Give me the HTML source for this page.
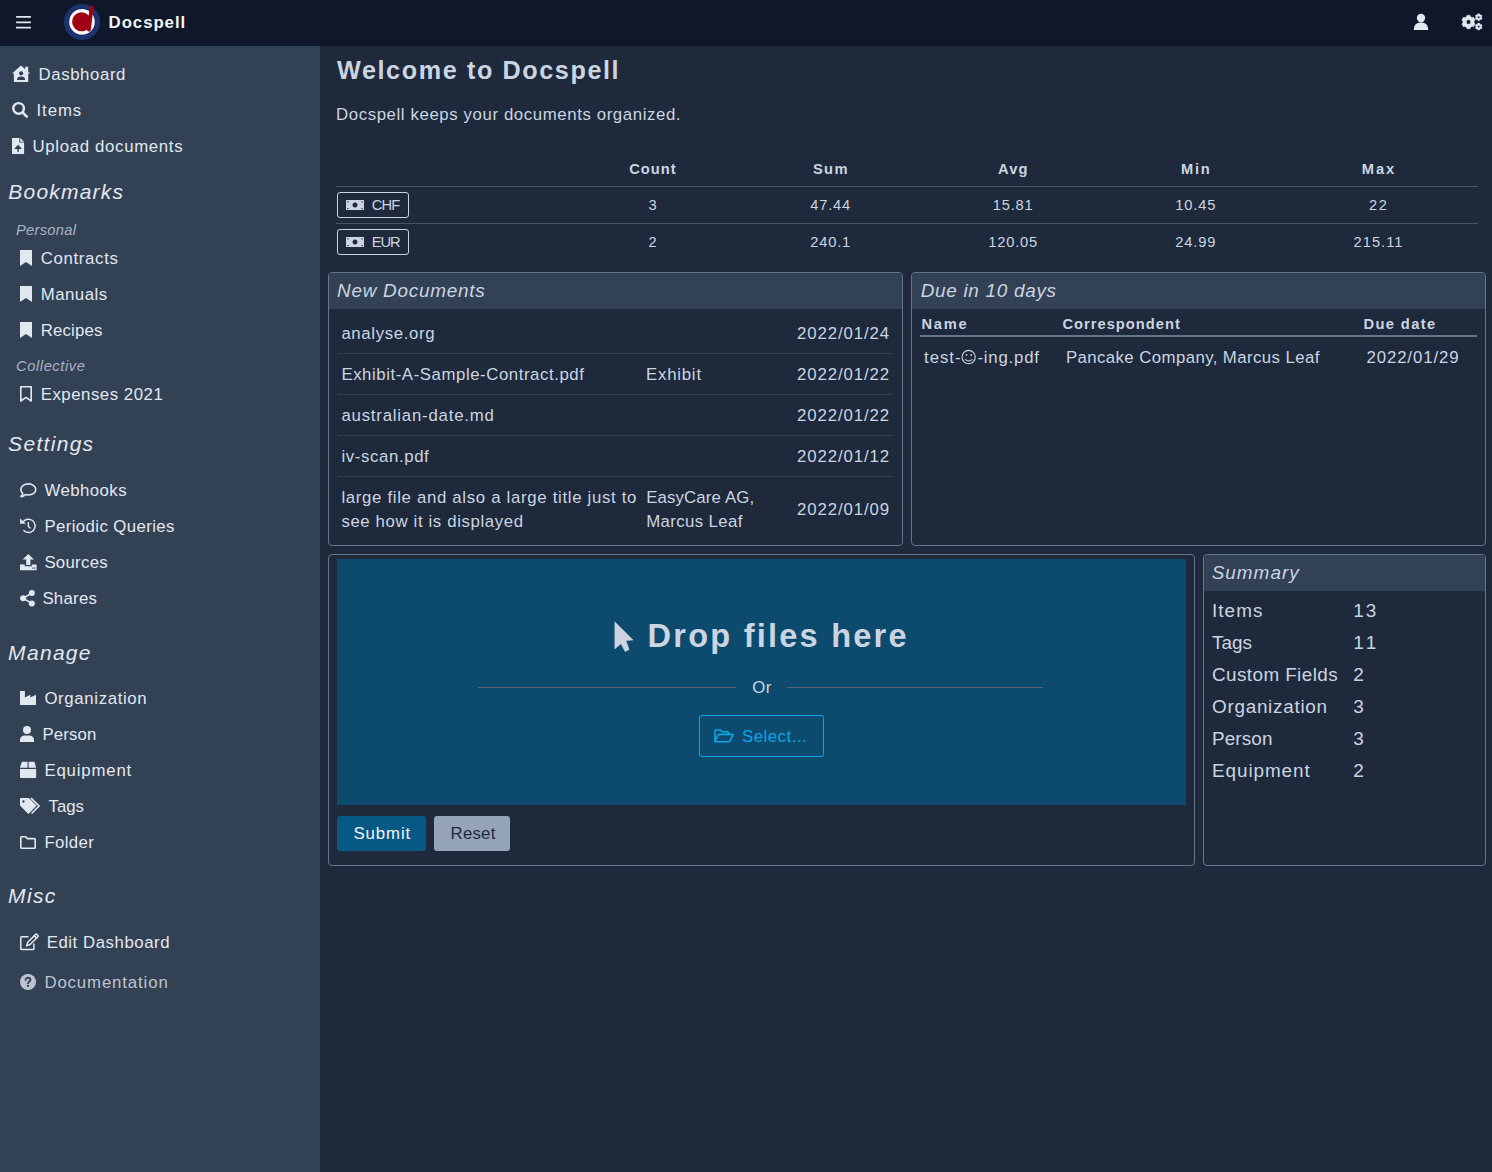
<!DOCTYPE html>
<html><head><meta charset="utf-8"><title>Docspell</title>
<style>
html,body{margin:0;padding:0;}
body{width:1492px;height:1172px;overflow:hidden;background:#1e293b;position:relative;font-family:"Liberation Sans",sans-serif;}
.t{position:absolute;white-space:pre;line-height:1;}
.b{position:absolute;box-sizing:border-box;}
svg.i{position:absolute;overflow:visible;}
</style></head><body>
<!-- top bar -->
<div class="b" style="left:0;top:0;width:1492px;height:46px;background:#0f172a"></div>
<!-- sidebar -->
<div class="b" style="left:0;top:46px;width:320px;height:1126px;background:#334155"></div>

<!-- stats table lines -->
<div class="b" style="left:336px;top:186px;width:1142px;height:1px;background:#475569"></div>
<div class="b" style="left:336px;top:223px;width:1142px;height:1px;background:#475569"></div>
<div class="b" style="left:337px;top:192px;width:72px;height:26px;border:1.5px solid #cbd5e1;border-radius:3px"></div>
<div class="b" style="left:337px;top:229px;width:72px;height:26px;border:1.5px solid #cbd5e1;border-radius:3px"></div>

<!-- cards -->
<div class="b" style="left:328px;top:272px;width:575px;height:274px;border:1px solid #64748b;border-radius:4px;overflow:hidden">
  <div class="b" style="left:0;top:0;width:100%;height:36px;background:#334155"></div>
</div>
<div class="b" style="left:911px;top:272px;width:575px;height:274px;border:1px solid #64748b;border-radius:4px;overflow:hidden">
  <div class="b" style="left:0;top:0;width:100%;height:36px;background:#334155"></div>
</div>
<div class="b" style="left:328px;top:554px;width:867px;height:312px;border:1px solid #64748b;border-radius:4px"></div>
<div class="b" style="left:1203px;top:554px;width:283px;height:312px;border:1px solid #64748b;border-radius:4px;overflow:hidden">
  <div class="b" style="left:0;top:0;width:100%;height:36px;background:#334155"></div>
</div>

<!-- dotted row separators -->
<div class="b" style="left:338px;top:353px;width:555px;height:0;border-top:1px dotted #475569"></div>
<div class="b" style="left:338px;top:394px;width:555px;height:0;border-top:1px dotted #475569"></div>
<div class="b" style="left:338px;top:435px;width:555px;height:0;border-top:1px dotted #475569"></div>
<div class="b" style="left:338px;top:476px;width:555px;height:0;border-top:1px dotted #475569"></div>
<!-- due header line -->
<div class="b" style="left:920px;top:335px;width:557px;height:2px;background:#64748b"></div>

<!-- dropzone -->
<div class="b" style="left:337px;top:559px;width:849px;height:246px;background:#0c4a6e"></div>
<div class="b" style="left:478px;top:687px;width:258px;height:1px;background:#5f6370"></div>
<div class="b" style="left:787px;top:687px;width:256px;height:1px;background:#5f6370"></div>
<div class="b" style="left:699px;top:715px;width:125px;height:42px;border:1px solid #0ea5e9;border-radius:3px"></div>
<div class="b" style="left:337px;top:816px;width:89px;height:35px;background:#075985;border-radius:3px"></div>
<div class="b" style="left:434px;top:816px;width:76px;height:35px;background:#94a3b8;border-radius:3px"></div>

<!-- ICONS -->
<!-- hamburger -->
<svg class="i" style="left:16px;top:16px" width="15" height="13" viewBox="0 0 15 13"><g fill="#e2e8f0"><rect x="0" y="0" width="15" height="1.8" rx=".6"/><rect x="0" y="5.4" width="15" height="1.8" rx=".6"/><rect x="0" y="10.8" width="15" height="1.8" rx=".6"/></g></svg>
<!-- logo -->
<svg class="i" style="left:64px;top:4px" width="36" height="36" viewBox="0 0 36 36">
  <circle cx="18" cy="18" r="18" fill="#1f3270"/>
  <circle cx="18" cy="17.9" r="13.4" fill="#13225e"/>
  <circle cx="18" cy="17.9" r="12.8" fill="#f8fafc"/>
  <circle cx="17.6" cy="17.7" r="9.5" fill="#a00012"/>
  <path d="M27.6 3.6 L24.9 25.7" stroke="#a00012" stroke-width="3.8" stroke-linecap="round"/>
</svg>
<!-- top-right user -->
<svg class="i" style="left:1413px;top:13px" width="16" height="18" viewBox="0 0 16 18"><g fill="#e2e8f0"><circle cx="8" cy="5" r="4.2"/><path d="M0.8 17 C0.8 12 3.5 9.6 8 9.6 C12.5 9.6 15.2 12 15.2 17 Z"/></g></svg>
<!-- cogs -->
<svg class="i" style="left:1461px;top:13px" width="22" height="18" viewBox="0 0 22 18">
  <g fill="#e2e8f0" fill-rule="evenodd" stroke="#e2e8f0" stroke-width="0.4" stroke-linejoin="round">
    <path d="M9.60 14.30 L9.03 15.83 L5.97 15.83 L5.40 14.30 L3.96 13.47 L2.35 13.74 L0.82 11.09 L1.86 9.83 L1.86 8.17 L0.82 6.91 L2.35 4.26 L3.96 4.53 L5.40 3.70 L5.97 2.17 L9.03 2.17 L9.60 3.70 L11.04 4.53 L12.65 4.26 L14.18 6.91 L13.14 8.17 L13.14 9.83 L14.18 11.09 L12.65 13.74 L11.04 13.47 Z M9.70 9.00 A2.2 2.2 0 1 0 5.30 9.00 A2.2 2.2 0 1 0 9.70 9.00 Z"/>
    <path d="M18.73 6.80 L18.49 7.71 L16.91 7.71 L16.67 6.80 L15.96 6.39 L15.05 6.64 L14.26 5.28 L14.93 4.61 L14.93 3.79 L14.26 3.12 L15.05 1.76 L15.96 2.01 L16.67 1.60 L16.91 0.69 L18.49 0.69 L18.73 1.60 L19.44 2.01 L20.35 1.76 L21.14 3.12 L20.47 3.79 L20.47 4.61 L21.14 5.28 L20.35 6.64 L19.44 6.39 Z M18.80 4.20 A1.1 1.1 0 1 0 16.60 4.20 A1.1 1.1 0 1 0 18.80 4.20 Z"/>
    <path d="M18.73 16.20 L18.49 17.11 L16.91 17.11 L16.67 16.20 L15.96 15.79 L15.05 16.04 L14.26 14.68 L14.93 14.01 L14.93 13.19 L14.26 12.52 L15.05 11.16 L15.96 11.41 L16.67 11.00 L16.91 10.09 L18.49 10.09 L18.73 11.00 L19.44 11.41 L20.35 11.16 L21.14 12.52 L20.47 13.19 L20.47 14.01 L21.14 14.68 L20.35 16.04 L19.44 15.79 Z M18.80 13.60 A1.1 1.1 0 1 0 16.60 13.60 A1.1 1.1 0 1 0 18.80 13.60 Z"/>
  </g>
</svg>
<!-- house-user -->
<svg class="i" style="left:12px;top:65px" width="19" height="18" viewBox="0 0 19 18">
  <path fill="#e2e8f0" d="M9 0.6 L13.2 4.2 L13.2 1.8 L16.2 1.8 L16.2 6.8 L18.2 8.6 L16.2 8.6 L16.2 17 L1.9 17 L1.9 8.6 L0 8.6 Z"/>
  <circle cx="9.1" cy="8.3" r="2.1" fill="#334155"/>
  <path fill="#334155" d="M5 15 C5 12.6 6.6 11.6 9.1 11.6 C11.6 11.6 13.2 12.6 13.2 15 Z"/>
</svg>
<!-- search -->
<svg class="i" style="left:12px;top:102px" width="17" height="17" viewBox="0 0 17 17"><g fill="none" stroke="#e2e8f0"><circle cx="6.6" cy="6.4" r="5.3" stroke-width="2.4"/><path d="M10.6 10.5 L14.8 14.6" stroke-width="2.6" stroke-linecap="round"/></g></svg>
<!-- file upload -->
<svg class="i" style="left:12px;top:138px" width="13" height="16" viewBox="0 0 13 16">
  <path fill="#e2e8f0" d="M0 0 L7.4 0 L7.4 4.6 L12.1 4.6 L12.1 16 L0 16 Z"/>
  <path fill="#e2e8f0" d="M8.3 0 L12.1 3.8 L8.3 3.8 Z"/>
  <path fill="#334155" d="M6.1 6.8 L10 10.9 L6.85 10.9 L6.85 13.8 L5.35 13.8 L5.35 10.9 L2.1 10.9 Z"/>
</svg>
<!-- bookmarks solid -->
<svg class="i" style="left:20px;top:250px" width="12" height="16" viewBox="0 0 12 16"><path fill="#e2e8f0" d="M0 0 H12 V16 L6 12 L0 16 Z"/></svg>
<svg class="i" style="left:20px;top:286px" width="12" height="16" viewBox="0 0 12 16"><path fill="#e2e8f0" d="M0 0 H12 V16 L6 12 L0 16 Z"/></svg>
<svg class="i" style="left:20px;top:322px" width="12" height="16" viewBox="0 0 12 16"><path fill="#e2e8f0" d="M0 0 H12 V16 L6 12 L0 16 Z"/></svg>
<!-- bookmark outline -->
<svg class="i" style="left:20px;top:386px" width="12" height="16" viewBox="0 0 12 16"><path fill="none" stroke="#e2e8f0" stroke-width="1.6" stroke-linejoin="round" d="M0.8 0.8 H11.2 V15 L6 11.4 L0.8 15 Z"/></svg>
<!-- comment (webhooks) -->
<svg class="i" style="left:20px;top:483px" width="17" height="15" viewBox="0 0 17 15"><path fill="none" stroke="#e2e8f0" stroke-width="1.6" stroke-linejoin="round" d="M8.3 0.9 C12.6 0.9 15.8 3.4 15.8 6.5 C15.8 9.6 12.6 12 8.3 12 C7.3 12 6.4 11.9 5.5 11.6 C4.3 12.6 2.6 13.6 0.9 13.6 C1.9 12.6 2.6 11.5 2.8 10.4 C1.5 9.3 0.8 8 0.8 6.5 C0.8 3.4 4 0.9 8.3 0.9 Z"/></svg>
<!-- history -->
<svg class="i" style="left:20px;top:517px" width="17" height="17" viewBox="0 0 17 17">
  <path fill="none" stroke="#e2e8f0" stroke-width="1.5" d="M2.72 5.30 A6.7 6.7 0 1 1 3.42 13.33"/>
  <path fill="#e2e8f0" d="M0.1 1.6 L0.1 6.7 L5.9 6.7 Z"/>
  <path fill="none" stroke="#e2e8f0" stroke-width="1.4" stroke-linecap="round" d="M8.3 5.6 V9.3 L10.1 11"/>
</svg>
<!-- upload (sources) -->
<svg class="i" style="left:20px;top:554px" width="17" height="17" viewBox="0 0 17 17">
  <path fill="#e2e8f0" d="M8.3 0 L14 5.6 L10.4 5.6 L10.4 11 L6.2 11 L6.2 5.6 L2.6 5.6 Z"/>
  <path fill="#e2e8f0" d="M0 10.6 L4.8 10.6 L4.8 12.2 L11.8 12.2 L11.8 10.6 L16.6 10.6 L16.6 16.2 L0 16.2 Z"/>
  <rect x="12.3" y="13.5" width="1.2" height="1.2" fill="#334155"/><rect x="14.1" y="13.5" width="1.2" height="1.2" fill="#334155"/>
</svg>
<!-- share -->
<svg class="i" style="left:20px;top:590px" width="15" height="17" viewBox="0 0 15 17">
  <g fill="#e2e8f0"><circle cx="11.8" cy="3.1" r="3"/><circle cx="3.1" cy="8.3" r="3"/><circle cx="11.8" cy="13.4" r="3"/></g>
  <path fill="none" stroke="#e2e8f0" stroke-width="1.6" d="M11.8 3.1 L3.1 8.3 L11.8 13.4"/>
</svg>
<!-- industry -->
<svg class="i" style="left:20px;top:691px" width="16" height="14" viewBox="0 0 16 14"><path fill="#e2e8f0" d="M0 0 H4.9 V6.6 L10.3 3.7 V6.6 L16 3.7 V14 H0 Z"/></svg>
<!-- person -->
<svg class="i" style="left:20px;top:726px" width="14" height="16" viewBox="0 0 14 16"><g fill="#e2e8f0"><circle cx="7" cy="4" r="4"/><path d="M0 16 V13.8 C0 11.2 2 9.4 4.6 9.4 H9.4 C12 9.4 14 11.2 14 13.8 V16 Z"/></g></svg>
<!-- box -->
<svg class="i" style="left:20px;top:761px" width="17" height="18" viewBox="0 0 17 18"><g fill="#e2e8f0"><path d="M1.8 0.7 H7.5 V6.7 H0 Z"/><path d="M8.6 0.7 H14.4 L16.2 6.7 H8.6 Z"/><path d="M0 8.1 H16.2 V16.1 Q16.2 17.1 15.2 17.1 H1 Q0 17.1 0 16.1 Z"/></g></svg>
<!-- tags -->
<svg class="i" style="left:20px;top:797px" width="21" height="18" viewBox="0 0 21 18">
  <path fill="#e2e8f0" fill-rule="evenodd" d="M0 2 Q0 0.9 1.1 0.9 L8.9 0.9 L16.2 8.3 Q16.6 8.7 16.2 9.1 L9 16.4 Q8.4 17 7.8 16.4 L0 8.6 Z M3.4 3.2 A1.25 1.25 0 1 0 3.41 3.2 Z"/>
  <path fill="none" stroke="#e2e8f0" stroke-width="1.7" d="M11 1.1 L19 9 L11.6 16.5"/>
</svg>
<!-- folder -->
<svg class="i" style="left:20px;top:836px" width="16" height="13" viewBox="0 0 16 13"><path fill="none" stroke="#e2e8f0" stroke-width="1.6" stroke-linejoin="round" d="M0.8 1.6 C0.8 1.1 1.1 0.8 1.6 0.8 H5.8 L7.4 2.6 H14.4 C14.9 2.6 15.2 2.9 15.2 3.4 V11.4 C15.2 11.9 14.9 12.2 14.4 12.2 H1.6 C1.1 12.2 0.8 11.9 0.8 11.4 Z"/></svg>
<!-- edit -->
<svg class="i" style="left:20px;top:933px" width="19" height="18" viewBox="0 0 19 18">
  <path fill="none" stroke="#e2e8f0" stroke-width="1.5" stroke-linejoin="round" d="M8.6 3.7 H1.6 Q0.8 3.7 0.8 4.5 V15.9 Q0.8 16.6 1.6 16.6 H13.1 Q13.9 16.6 13.9 15.9 V10.6"/>
  <path fill="none" stroke="#e2e8f0" stroke-width="1.5" stroke-linejoin="round" d="M15.6 1.4 Q16.2 0.9 16.8 1.4 L17.9 2.5 Q18.4 3.1 17.9 3.7 L10.1 11.5 L6.6 12.7 L7.8 9.2 Z M14.2 2.8 L16.5 5.1"/>
</svg>
<!-- question -->
<svg class="i" style="left:20px;top:974px" width="16" height="16" viewBox="0 0 16 16">
  <circle cx="8" cy="8" r="8" fill="#bec4ce"/>
  <path fill="none" stroke="#334155" stroke-width="1.9" stroke-linecap="round" d="M5.6 6.1 C5.6 4.6 6.7 3.8 8 3.8 C9.4 3.8 10.4 4.6 10.4 5.9 C10.4 7.4 8.1 7.6 8.1 9.2"/>
  <circle cx="8.1" cy="11.9" r="1.1" fill="#334155"/>
</svg>
<!-- money bills -->
<svg class="i" style="left:346px;top:200px" width="18" height="11" viewBox="0 0 18 11"><path fill="#cbd5e1" fill-rule="evenodd" d="M0 0 H18 V10 H0 Z M9 2.4 A2.5 2.5 0 1 0 9.01 2.4 Z"/><g fill="#1e293b"><rect x="1.3" y="1.3" width="1.2" height="1.2"/><rect x="15.5" y="1.3" width="1.2" height="1.2"/><rect x="1.3" y="8" width="1.2" height="1.2"/><rect x="15.5" y="8" width="1.2" height="1.2"/></g></svg>
<svg class="i" style="left:346px;top:237px" width="18" height="11" viewBox="0 0 18 11"><path fill="#cbd5e1" fill-rule="evenodd" d="M0 0 H18 V10 H0 Z M9 2.4 A2.5 2.5 0 1 0 9.01 2.4 Z"/><g fill="#1e293b"><rect x="1.3" y="1.3" width="1.2" height="1.2"/><rect x="15.5" y="1.3" width="1.2" height="1.2"/><rect x="1.3" y="8" width="1.2" height="1.2"/><rect x="15.5" y="8" width="1.2" height="1.2"/></g></svg>
<!-- pointer -->
<svg class="i" style="left:614px;top:621px" width="20" height="32" viewBox="0 0 20 32"><path fill="#cbd5e1" stroke="#cbd5e1" stroke-width="0.6" stroke-linejoin="round" d="M0.9 1 L19 19 L11.9 19.5 L15.1 28.6 L11.1 30.5 L7 22.7 L0.9 27.8 Z"/></svg>
<!-- folder open -->
<svg class="i" style="left:714px;top:729px" width="20" height="14" viewBox="0 0 20 14"><path fill="none" stroke="#0ea5e9" stroke-width="1.6" stroke-linejoin="round" d="M1 12.2 V2 C1 1.4 1.4 1 2 1 H6.4 L8.2 2.8 H13.4 C14 2.8 14.4 3.2 14.4 3.8 V5.4 M1 12.2 L4.2 6 C4.4 5.6 4.8 5.4 5.2 5.4 H18.2 C18.8 5.4 19.1 6 18.8 6.5 L15.8 12.2 C15.6 12.6 15.2 12.8 14.8 12.8 H1.8 C1.4 12.8 1.1 12.6 1 12.2 Z"/></svg>
<!-- smiley -->
<svg class="i" style="left:961px;top:350px" width="16" height="15" viewBox="0 0 16 15"><g fill="none" stroke="#cbd5e1" stroke-width="1.1"><ellipse cx="7.65" cy="7.1" rx="6.6" ry="6.7"/><path d="M4.1 9.3 Q7.65 12.6 11.4 9.3"/></g><g fill="#cbd5e1"><rect x="4.8" y="4.2" width="1.5" height="1.6"/><rect x="9.4" y="4.2" width="1.5" height="1.6"/></g></svg>


<!-- TEXTS -->
<span class="t" style="left:108.60px;top:15.20px;font-family:'Liberation Sans';font-size:16.80px;font-weight:bold;font-style:normal;letter-spacing:0.944px;color:#f1f5f9">Docspell</span>
<span class="t" style="left:38.60px;top:67.00px;font-family:'Liberation Sans';font-size:16.80px;font-weight:normal;font-style:normal;letter-spacing:0.588px;color:#e2e8f0">Dasbhoard</span>
<span class="t" style="left:36.50px;top:103.00px;font-family:'Liberation Sans';font-size:16.80px;font-weight:normal;font-style:normal;letter-spacing:0.934px;color:#e2e8f0">Items</span>
<span class="t" style="left:32.40px;top:139.00px;font-family:'Liberation Sans';font-size:16.80px;font-weight:normal;font-style:normal;letter-spacing:0.685px;color:#e2e8f0">Upload documents</span>
<span class="t" style="left:40.70px;top:251.00px;font-family:'Liberation Sans';font-size:16.80px;font-weight:normal;font-style:normal;letter-spacing:0.670px;color:#e2e8f0">Contracts</span>
<span class="t" style="left:40.70px;top:287.00px;font-family:'Liberation Sans';font-size:16.80px;font-weight:normal;font-style:normal;letter-spacing:0.508px;color:#e2e8f0">Manuals</span>
<span class="t" style="left:40.70px;top:323.00px;font-family:'Liberation Sans';font-size:16.80px;font-weight:normal;font-style:normal;letter-spacing:0.198px;color:#e2e8f0">Recipes</span>
<span class="t" style="left:40.70px;top:387.00px;font-family:'Liberation Sans';font-size:16.80px;font-weight:normal;font-style:normal;letter-spacing:0.529px;color:#e2e8f0">Expenses 2021</span>
<span class="t" style="left:44.40px;top:483.00px;font-family:'Liberation Sans';font-size:16.80px;font-weight:normal;font-style:normal;letter-spacing:0.460px;color:#e2e8f0">Webhooks</span>
<span class="t" style="left:44.40px;top:519.00px;font-family:'Liberation Sans';font-size:16.80px;font-weight:normal;font-style:normal;letter-spacing:0.396px;color:#e2e8f0">Periodic Queries</span>
<span class="t" style="left:44.40px;top:555.00px;font-family:'Liberation Sans';font-size:16.80px;font-weight:normal;font-style:normal;letter-spacing:0.289px;color:#e2e8f0">Sources</span>
<span class="t" style="left:42.40px;top:591.00px;font-family:'Liberation Sans';font-size:16.80px;font-weight:normal;font-style:normal;letter-spacing:0.269px;color:#e2e8f0">Shares</span>
<span class="t" style="left:44.40px;top:691.00px;font-family:'Liberation Sans';font-size:16.80px;font-weight:normal;font-style:normal;letter-spacing:0.649px;color:#e2e8f0">Organization</span>
<span class="t" style="left:42.50px;top:727.00px;font-family:'Liberation Sans';font-size:16.80px;font-weight:normal;font-style:normal;letter-spacing:0.119px;color:#e2e8f0">Person</span>
<span class="t" style="left:44.40px;top:763.00px;font-family:'Liberation Sans';font-size:16.80px;font-weight:normal;font-style:normal;letter-spacing:0.828px;color:#e2e8f0">Equipment</span>
<span class="t" style="left:48.60px;top:799.00px;font-family:'Liberation Sans';font-size:16.80px;font-weight:normal;font-style:normal;letter-spacing:-0.010px;color:#e2e8f0">Tags</span>
<span class="t" style="left:44.40px;top:835.00px;font-family:'Liberation Sans';font-size:16.80px;font-weight:normal;font-style:normal;letter-spacing:0.375px;color:#e2e8f0">Folder</span>
<span class="t" style="left:46.70px;top:935.00px;font-family:'Liberation Sans';font-size:16.80px;font-weight:normal;font-style:normal;letter-spacing:0.553px;color:#e2e8f0">Edit Dashboard</span>
<span class="t" style="left:44.40px;top:975.00px;font-family:'Liberation Sans';font-size:16.80px;font-weight:normal;font-style:normal;letter-spacing:0.872px;color:#bec4ce">Documentation</span>
<span class="t" style="left:8.30px;top:180.50px;font-family:'Liberation Sans';font-size:21.00px;font-weight:normal;font-style:italic;letter-spacing:1.215px;color:#e2e8f0">Bookmarks</span>
<span class="t" style="left:8.10px;top:433.00px;font-family:'Liberation Sans';font-size:21.00px;font-weight:normal;font-style:italic;letter-spacing:1.306px;color:#e2e8f0">Settings</span>
<span class="t" style="left:8.10px;top:641.50px;font-family:'Liberation Sans';font-size:21.00px;font-weight:normal;font-style:italic;letter-spacing:1.312px;color:#e2e8f0">Manage</span>
<span class="t" style="left:8.10px;top:884.50px;font-family:'Liberation Sans';font-size:21.00px;font-weight:normal;font-style:italic;letter-spacing:1.354px;color:#e2e8f0">Misc</span>
<span class="t" style="left:16.00px;top:223.00px;font-family:'Liberation Sans';font-size:14.70px;font-weight:normal;font-style:italic;letter-spacing:0.292px;color:#a9b4c4">Personal</span>
<span class="t" style="left:16.10px;top:359.00px;font-family:'Liberation Sans';font-size:14.70px;font-weight:normal;font-style:italic;letter-spacing:0.561px;color:#a9b4c4">Collective</span>
<span class="t" style="left:337.00px;top:58.00px;font-family:'Liberation Sans';font-size:25.20px;font-weight:bold;font-style:normal;letter-spacing:1.597px;color:#cbd5e1">Welcome to Docspell</span>
<span class="t" style="left:336.00px;top:107.40px;font-family:'Liberation Sans';font-size:16.80px;font-weight:normal;font-style:normal;letter-spacing:0.606px;color:#cbd5e1">Docspell keeps your documents organized.</span>
<span class="t" style="left:629.23px;top:162.00px;font-family:'Liberation Sans';font-size:14.70px;font-weight:bold;font-style:normal;letter-spacing:1.027px;color:#cbd5e1">Count</span>
<span class="t" style="left:812.88px;top:162.00px;font-family:'Liberation Sans';font-size:14.70px;font-weight:bold;font-style:normal;letter-spacing:1.406px;color:#cbd5e1">Sum</span>
<span class="t" style="left:997.96px;top:162.00px;font-family:'Liberation Sans';font-size:14.70px;font-weight:bold;font-style:normal;letter-spacing:1.141px;color:#cbd5e1">Avg</span>
<span class="t" style="left:1180.95px;top:162.00px;font-family:'Liberation Sans';font-size:14.70px;font-weight:bold;font-style:normal;letter-spacing:1.703px;color:#cbd5e1">Min</span>
<span class="t" style="left:1361.79px;top:162.00px;font-family:'Liberation Sans';font-size:14.70px;font-weight:bold;font-style:normal;letter-spacing:1.922px;color:#cbd5e1">Max</span>
<span class="t" style="left:648.41px;top:198.20px;font-family:'Liberation Sans';font-size:14.70px;font-weight:normal;font-style:normal;letter-spacing:0.000px;color:#cbd5e1">3</span>
<span class="t" style="left:810.15px;top:198.20px;font-family:'Liberation Sans';font-size:14.70px;font-weight:normal;font-style:normal;letter-spacing:0.832px;color:#cbd5e1">47.44</span>
<span class="t" style="left:992.65px;top:198.20px;font-family:'Liberation Sans';font-size:14.70px;font-weight:normal;font-style:normal;letter-spacing:0.832px;color:#cbd5e1">15.81</span>
<span class="t" style="left:1175.25px;top:198.20px;font-family:'Liberation Sans';font-size:14.70px;font-weight:normal;font-style:normal;letter-spacing:0.832px;color:#cbd5e1">10.45</span>
<span class="t" style="left:1369.09px;top:198.20px;font-family:'Liberation Sans';font-size:14.70px;font-weight:normal;font-style:normal;letter-spacing:1.484px;color:#cbd5e1">22</span>
<span class="t" style="left:648.41px;top:235.20px;font-family:'Liberation Sans';font-size:14.70px;font-weight:normal;font-style:normal;letter-spacing:0.000px;color:#cbd5e1">2</span>
<span class="t" style="left:810.15px;top:235.20px;font-family:'Liberation Sans';font-size:14.70px;font-weight:normal;font-style:normal;letter-spacing:0.832px;color:#cbd5e1">240.1</span>
<span class="t" style="left:988.20px;top:235.20px;font-family:'Liberation Sans';font-size:14.70px;font-weight:normal;font-style:normal;letter-spacing:0.812px;color:#cbd5e1">120.05</span>
<span class="t" style="left:1175.25px;top:235.20px;font-family:'Liberation Sans';font-size:14.70px;font-weight:normal;font-style:normal;letter-spacing:0.832px;color:#cbd5e1">24.99</span>
<span class="t" style="left:1353.50px;top:235.20px;font-family:'Liberation Sans';font-size:14.70px;font-weight:normal;font-style:normal;letter-spacing:1.031px;color:#cbd5e1">215.11</span>
<span class="t" style="left:371.80px;top:198.30px;font-family:'Liberation Sans';font-size:14.70px;font-weight:normal;font-style:normal;letter-spacing:-0.914px;color:#cbd5e1">CHF</span>
<span class="t" style="left:371.80px;top:235.20px;font-family:'Liberation Sans';font-size:14.70px;font-weight:normal;font-style:normal;letter-spacing:-1.094px;color:#cbd5e1">EUR</span>
<span class="t" style="left:337.00px;top:282.00px;font-family:'Liberation Sans';font-size:18.90px;font-weight:normal;font-style:italic;letter-spacing:0.753px;color:#cbd5e1">New Documents</span>
<span class="t" style="left:341.40px;top:326.00px;font-family:'Liberation Sans';font-size:16.80px;font-weight:normal;font-style:normal;letter-spacing:0.641px;color:#cbd5e1">analyse.org</span>
<span class="t" style="left:796.98px;top:326.00px;font-family:'Liberation Sans';font-size:16.80px;font-weight:normal;font-style:normal;letter-spacing:0.913px;color:#cbd5e1">2022/01/24</span>
<span class="t" style="left:341.40px;top:367.20px;font-family:'Liberation Sans';font-size:16.80px;font-weight:normal;font-style:normal;letter-spacing:0.565px;color:#cbd5e1">Exhibit-A-Sample-Contract.pdf</span>
<span class="t" style="left:646.00px;top:367.20px;font-family:'Liberation Sans';font-size:16.80px;font-weight:normal;font-style:normal;letter-spacing:0.779px;color:#cbd5e1">Exhibit</span>
<span class="t" style="left:796.98px;top:367.20px;font-family:'Liberation Sans';font-size:16.80px;font-weight:normal;font-style:normal;letter-spacing:0.913px;color:#cbd5e1">2022/01/22</span>
<span class="t" style="left:341.40px;top:408.00px;font-family:'Liberation Sans';font-size:16.80px;font-weight:normal;font-style:normal;letter-spacing:0.791px;color:#cbd5e1">australian-date.md</span>
<span class="t" style="left:796.98px;top:408.00px;font-family:'Liberation Sans';font-size:16.80px;font-weight:normal;font-style:normal;letter-spacing:0.913px;color:#cbd5e1">2022/01/22</span>
<span class="t" style="left:341.40px;top:449.00px;font-family:'Liberation Sans';font-size:16.80px;font-weight:normal;font-style:normal;letter-spacing:0.622px;color:#cbd5e1">iv-scan.pdf</span>
<span class="t" style="left:796.98px;top:449.00px;font-family:'Liberation Sans';font-size:16.80px;font-weight:normal;font-style:normal;letter-spacing:0.913px;color:#cbd5e1">2022/01/12</span>
<span class="t" style="left:341.40px;top:490.00px;font-family:'Liberation Sans';font-size:16.80px;font-weight:normal;font-style:normal;letter-spacing:0.681px;color:#cbd5e1">large file and also a large title just to</span>
<span class="t" style="left:341.40px;top:514.00px;font-family:'Liberation Sans';font-size:16.80px;font-weight:normal;font-style:normal;letter-spacing:0.627px;color:#cbd5e1">see how it is displayed</span>
<span class="t" style="left:646.20px;top:490.00px;font-family:'Liberation Sans';font-size:16.80px;font-weight:normal;font-style:normal;letter-spacing:0.152px;color:#cbd5e1">EasyCare AG,</span>
<span class="t" style="left:646.20px;top:514.00px;font-family:'Liberation Sans';font-size:16.80px;font-weight:normal;font-style:normal;letter-spacing:0.377px;color:#cbd5e1">Marcus Leaf</span>
<span class="t" style="left:796.98px;top:502.00px;font-family:'Liberation Sans';font-size:16.80px;font-weight:normal;font-style:normal;letter-spacing:0.913px;color:#cbd5e1">2022/01/09</span>
<span class="t" style="left:920.70px;top:282.00px;font-family:'Liberation Sans';font-size:18.90px;font-weight:normal;font-style:italic;letter-spacing:0.714px;color:#cbd5e1">Due in 10 days</span>
<span class="t" style="left:921.50px;top:317.00px;font-family:'Liberation Sans';font-size:14.70px;font-weight:bold;font-style:normal;letter-spacing:1.745px;color:#cbd5e1">Name</span>
<span class="t" style="left:1062.50px;top:317.00px;font-family:'Liberation Sans';font-size:14.70px;font-weight:bold;font-style:normal;letter-spacing:1.004px;color:#cbd5e1">Correspondent</span>
<span class="t" style="left:1363.50px;top:317.00px;font-family:'Liberation Sans';font-size:14.70px;font-weight:bold;font-style:normal;letter-spacing:1.371px;color:#cbd5e1">Due date</span>
<span class="t" style="left:924.10px;top:350.00px;font-family:'Liberation Sans';font-size:16.80px;font-weight:normal;font-style:normal;letter-spacing:0.965px;color:#cbd5e1">test-</span>
<span class="t" style="left:977.40px;top:350.00px;font-family:'Liberation Sans';font-size:16.80px;font-weight:normal;font-style:normal;letter-spacing:0.795px;color:#cbd5e1">-ing.pdf</span>
<span class="t" style="left:1065.90px;top:350.00px;font-family:'Liberation Sans';font-size:16.80px;font-weight:normal;font-style:normal;letter-spacing:0.418px;color:#cbd5e1">Pancake Company, Marcus Leaf</span>
<span class="t" style="left:1366.40px;top:350.00px;font-family:'Liberation Sans';font-size:16.80px;font-weight:normal;font-style:normal;letter-spacing:0.913px;color:#cbd5e1">2022/01/29</span>
<span class="t" style="left:647.60px;top:619.80px;font-family:'Liberation Sans';font-size:32.55px;font-weight:bold;font-style:normal;letter-spacing:2.221px;color:#cbd5e1">Drop files here</span>
<span class="t" style="left:752.30px;top:680.00px;font-family:'Liberation Sans';font-size:16.80px;font-weight:normal;font-style:normal;letter-spacing:0.516px;color:#cbd5e1">Or</span>
<span class="t" style="left:742.00px;top:729.00px;font-family:'Liberation Sans';font-size:16.80px;font-weight:normal;font-style:normal;letter-spacing:0.498px;color:#0ea5e9">Select...</span>
<span class="t" style="left:353.50px;top:826.00px;font-family:'Liberation Sans';font-size:16.80px;font-weight:normal;font-style:normal;letter-spacing:0.906px;color:#f1f5f9">Submit</span>
<span class="t" style="left:450.60px;top:826.00px;font-family:'Liberation Sans';font-size:16.80px;font-weight:normal;font-style:normal;letter-spacing:0.215px;color:#1e293b">Reset</span>
<span class="t" style="left:1211.70px;top:564.20px;font-family:'Liberation Sans';font-size:18.90px;font-weight:normal;font-style:italic;letter-spacing:1.029px;color:#cbd5e1">Summary</span>
<span class="t" style="left:1212.00px;top:601.50px;font-family:'Liberation Sans';font-size:18.90px;font-weight:normal;font-style:normal;letter-spacing:1.043px;color:#cbd5e1">Items</span>
<span class="t" style="left:1353.30px;top:601.50px;font-family:'Liberation Sans';font-size:18.90px;font-weight:normal;font-style:normal;letter-spacing:1.891px;color:#cbd5e1">13</span>
<span class="t" style="left:1212.00px;top:633.60px;font-family:'Liberation Sans';font-size:18.90px;font-weight:normal;font-style:normal;letter-spacing:-0.016px;color:#cbd5e1">Tags</span>
<span class="t" style="left:1353.30px;top:633.60px;font-family:'Liberation Sans';font-size:18.90px;font-weight:normal;font-style:normal;letter-spacing:3.281px;color:#cbd5e1">11</span>
<span class="t" style="left:1212.00px;top:665.70px;font-family:'Liberation Sans';font-size:18.90px;font-weight:normal;font-style:normal;letter-spacing:0.406px;color:#cbd5e1">Custom Fields</span>
<span class="t" style="left:1353.30px;top:665.70px;font-family:'Liberation Sans';font-size:18.90px;font-weight:normal;font-style:normal;letter-spacing:0.000px;color:#cbd5e1">2</span>
<span class="t" style="left:1212.00px;top:697.80px;font-family:'Liberation Sans';font-size:18.90px;font-weight:normal;font-style:normal;letter-spacing:0.724px;color:#cbd5e1">Organization</span>
<span class="t" style="left:1353.30px;top:697.80px;font-family:'Liberation Sans';font-size:18.90px;font-weight:normal;font-style:normal;letter-spacing:0.000px;color:#cbd5e1">3</span>
<span class="t" style="left:1212.00px;top:729.90px;font-family:'Liberation Sans';font-size:18.90px;font-weight:normal;font-style:normal;letter-spacing:0.128px;color:#cbd5e1">Person</span>
<span class="t" style="left:1353.30px;top:729.90px;font-family:'Liberation Sans';font-size:18.90px;font-weight:normal;font-style:normal;letter-spacing:0.000px;color:#cbd5e1">3</span>
<span class="t" style="left:1212.00px;top:762.00px;font-family:'Liberation Sans';font-size:18.90px;font-weight:normal;font-style:normal;letter-spacing:0.926px;color:#cbd5e1">Equipment</span>
<span class="t" style="left:1353.30px;top:762.00px;font-family:'Liberation Sans';font-size:18.90px;font-weight:normal;font-style:normal;letter-spacing:0.000px;color:#cbd5e1">2</span>
</body></html>
